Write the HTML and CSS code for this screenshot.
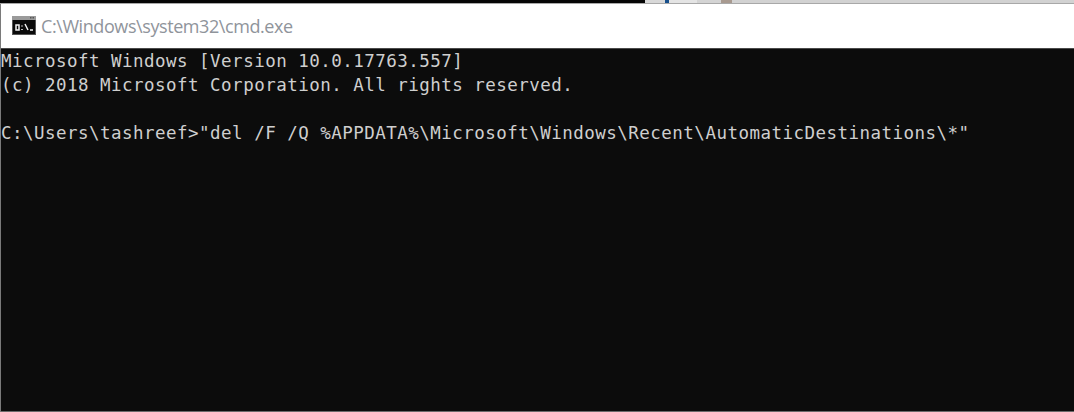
FILE: index.html
```html
<!DOCTYPE html>
<html lang="en">
<head>
<meta charset="utf-8">
<title>cmd.exe</title>
<link rel="stylesheet" href="styles.css">
</head>
<body>
<div class="screen">
  <div class="desktop-strip">
    <div class="strip-dark"></div>
    <div class="strip-a"></div>
    <div class="strip-blue"></div>
    <div class="strip-b"></div>
    <div class="strip-c"></div>
    <div class="strip-tan"></div>
    <div class="strip-rest"></div>
  </div>
  <div class="window">
    <div class="titlebar">
      <svg class="app-icon" width="24" height="19" viewBox="0 0 24 19">
        <rect x="0" y="0" width="24" height="19" fill="#555555"/>
        <rect x="0" y="0" width="24" height="4" fill="#9a9a9a"/>
        <rect x="18" y="1" width="1.5" height="1.5" fill="#555"/>
        <rect x="20.5" y="1" width="1.5" height="1.5" fill="#555"/>
        <rect x="1" y="4" width="22" height="14" fill="#0a0a0a"/>
        <path d="M4 9h3v5H4zM10 9.5v1M10 13v1M13 8l3 6M18 14h3" fill="none" stroke="#f2f2f2" stroke-width="1.5"/>
      </svg>
      <span class="title">C:\Windows\system32\cmd.exe</span>
    </div>
    <pre class="console">Microsoft Windows [Version 10.0.17763.557]
(c) 2018 Microsoft Corporation. All rights reserved.

C:\Users\tashreef&gt;"del /F /Q %APPDATA%\Microsoft\Windows\Recent\AutomaticDestinations\*"</pre>
  </div>
</div>
</body>
</html>
```
FILE: styles.css
```css
html, body {
  margin: 0;
  padding: 0;
  background: #0c0c0c;
}
.screen {
  width: 1074px;
  height: 412px;
  display: flex;
  flex-direction: column;
  overflow: hidden;
}
.desktop-strip {
  height: 4px;
  flex: none;
  display: flex;
  background: #d2d2d2;
  border-bottom: 1px solid #a8a8a8;
  box-sizing: border-box;
}
.strip-dark { width: 645px; background: #050505; }
.strip-a { width: 20px; background: #d8d8d8; }
.strip-blue { width: 4px; background: #17508c; }
.strip-b { width: 28px; background: #e4e4e4; }
.strip-c { width: 24px; background: #d4d4d4; }
.strip-tan { width: 11px; background: #a89a90; }
.strip-rest { flex: 1; }
.window {
  flex: 1;
  display: flex;
  flex-direction: column;
  border-left: 1px solid #7a7a7a;
}
.titlebar {
  height: 44px;
  flex: none;
  display: flex;
  align-items: center;
  gap: 5px;
  padding-left: 11px;
  background: #ffffff;
}
.app-icon { flex: none; margin-top: -2px; }
.title {
  font-family: "Open Sans", "Noto Sans", sans-serif;
  font-size: 18px;
  letter-spacing: -0.42px;
  color: #8f949b;
}
.console {
  flex: 1;
  margin: 0;
  padding: 0;
  background: #0c0c0c;
  border-top: 1px solid #4a4a4a;
  border-bottom: 1px solid #6a6a6a;
  color: #cfcfcf;
  font-family: "DejaVu Sans Mono", "Liberation Mono", monospace;
  font-size: 17.5px;
  letter-spacing: 0.47px;
  line-height: 24px;
  white-space: pre;
}
```
